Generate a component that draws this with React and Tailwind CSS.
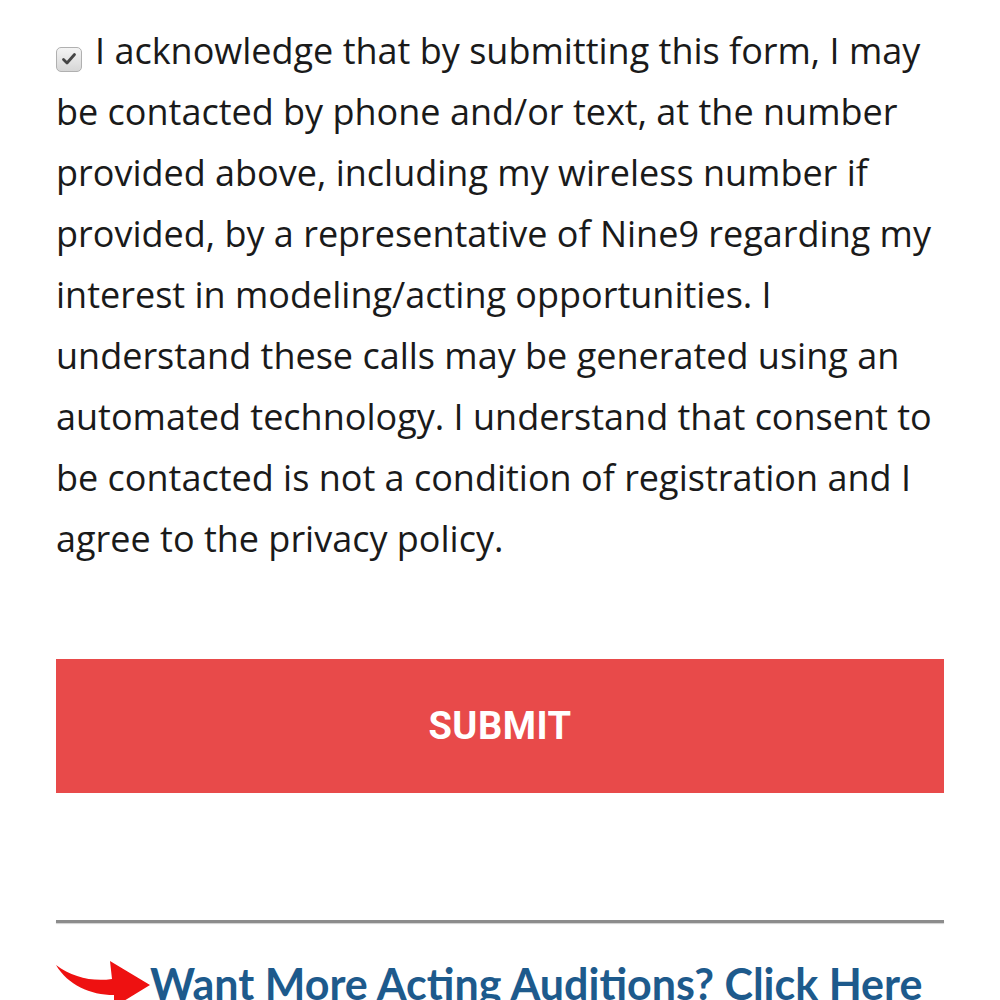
import React from 'react';

function CheckMark() {
    return (
        <span className="inline-flex items-center justify-center w-[26px] h-[25px] mr-[13px] align-[-3px] rounded-[5px] border border-[#b0b0b0] bg-gradient-to-b from-[#f4f4f4] to-[#d6d6d6]">
            <svg viewBox="0 0 16 16" className="w-[16px] h-[16px]">
                <path d="M2.5 8.5 L6 12 L13.5 3.5" fill="none" stroke="#454545" strokeWidth="2.8" strokeLinecap="round" strokeLinejoin="round" />
            </svg>
        </span>
    );
}

function RedArrow() {
    return (
        <svg viewBox="0 0 94 44" className="w-[94px] h-[44px] shrink-0">
            <path d="M0 4 C16 16 36 21 56 18 L54 0 L94 24 L58 46 L58 34 C34 34 12 24 0 4 Z" fill="#ee1111" />
        </svg>
    );
}

export default function App() {
    return (
        <div className="w-[1000px] h-[1000px] overflow-hidden bg-white px-[56px]" style={{ fontFamily: '"Open Sans", sans-serif' }}>
            <p className="pt-[20px] text-[36px] leading-[61px] text-[#1a1a1a]">
                <CheckMark />
                I acknowledge that by submitting this form, I may be contacted by phone and/or text, at the number provided above, including my wireless number if provided, by a representative of Nine9 regarding my interest in modeling/acting opportunities. I understand these calls may be generated using an automated technology. I understand that consent to be contacted is not a condition of registration and I agree to the privacy policy.
            </p>

            <button className="mt-[90px] w-full h-[134px] bg-[#e84a4a] text-white text-[38px] font-bold tracking-[0.5px]" style={{ fontFamily: 'Roboto, sans-serif' }}>
                SUBMIT
            </button>

            <hr className="mt-[127px] border-0 h-[3px] bg-[#8c8c8c] shadow-[0_1px_1px_#d0d0d0]" />

            <div className="mt-[38px] flex items-start">
                <RedArrow />
                <span className="text-[43px] leading-[50px] font-bold text-[#1d5a8c] -mt-[2px]" style={{ fontFamily: 'Lato, sans-serif' }}>
                    Want More Acting Auditions? Click Here
                </span>
            </div>
        </div>
    );
}
